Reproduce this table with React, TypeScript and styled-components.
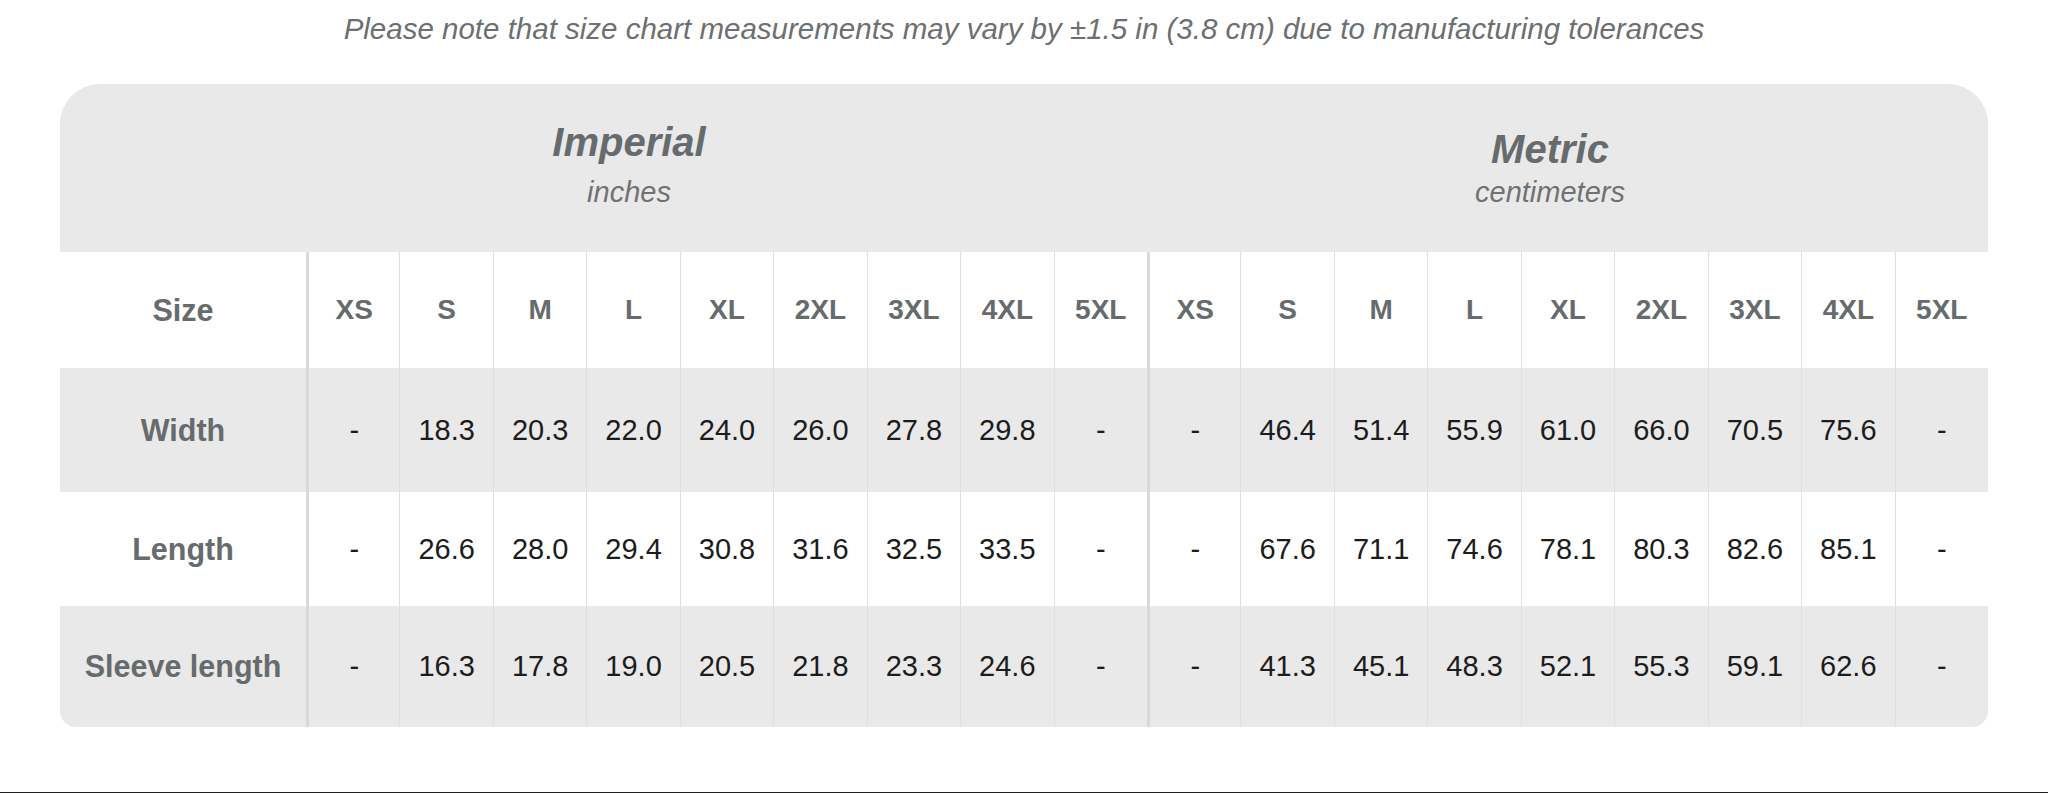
import styled, { createGlobalStyle } from "styled-components";

const GlobalStyle = createGlobalStyle`
  body {
    margin: 0;
    background: #ffffff;
    font-family: "Liberation Sans", Arial, sans-serif;
  }
`;

const Page = styled.div`
  display: flex;
  flex-direction: column;
  align-items: center;
  box-sizing: border-box;
  height: 793px;
  padding-top: 14px;
  border-bottom: 1px solid #1e1e1e;
`;

const Note = styled.p`
  margin: 0;
  font-size: 29.5px;
  line-height: 29px;
  font-style: italic;
  color: #6c6f71;
`;

const Card = styled.div`
  width: 1928px;
  margin-top: 41px;
  border-radius: 40px 40px 16px 16px;
  overflow: hidden;
  background: #ffffff;
`;

const Head = styled.div`
  display: grid;
  grid-template-columns: 1138px 1fr;
  height: 168px;
  background: #e9e9e9;
`;

const HeadCell = styled.div<{ $top: number; $gap: number; $right?: number }>`
  display: flex;
  flex-direction: column;
  align-items: center;
  padding-top: ${(p) => p.$top}px;
  padding-right: ${(p) => p.$right ?? 0}px;
  color: #666b6d;
  font-style: italic;

  span:first-child {
    font-size: 40px;
    line-height: 1;
    font-weight: 700;
    margin-bottom: ${(p) => p.$gap}px;
  }
  span:last-child {
    font-size: 29px;
    line-height: 1;
    color: #6e7274;
  }
`;

const Row = styled.div<{ $shade?: boolean; $h: number }>`
  display: grid;
  grid-template-columns: 246px repeat(18, 1fr);
  height: ${(p) => p.$h}px;
  background: ${(p) => (p.$shade ? "#e9e9e9" : "#ffffff")};
`;

const Label = styled.div`
  display: flex;
  align-items: center;
  justify-content: center;
  font-size: 30.5px;
  font-weight: 700;
  color: #666b6d;
`;

const Cell = styled.div<{ $thick?: boolean; $head?: boolean }>`
  display: flex;
  align-items: center;
  justify-content: center;
  box-sizing: border-box;
  border-left: ${(p) => (p.$thick ? "3px solid #d9d9d9" : "1px solid #dfdfdf")};
  font-size: ${(p) => (p.$head ? "28px" : "29px")};
  font-weight: ${(p) => (p.$head ? 700 : 400)};
  color: ${(p) => (p.$head ? "#666b6d" : "#1c1c1c")};
`;

const sizes = ["XS", "S", "M", "L", "XL", "2XL", "3XL", "4XL", "5XL"];

const rows: { label: string; h: number; inch: string[]; cm: string[] }[] = [
  {
    label: "Width",
    h: 124,
    inch: ["-", "18.3", "20.3", "22.0", "24.0", "26.0", "27.8", "29.8", "-"],
    cm: ["-", "46.4", "51.4", "55.9", "61.0", "66.0", "70.5", "75.6", "-"],
  },
  {
    label: "Length",
    h: 114,
    inch: ["-", "26.6", "28.0", "29.4", "30.8", "31.6", "32.5", "33.5", "-"],
    cm: ["-", "67.6", "71.1", "74.6", "78.1", "80.3", "82.6", "85.1", "-"],
  },
  {
    label: "Sleeve length",
    h: 121,
    inch: ["-", "16.3", "17.8", "19.0", "20.5", "21.8", "23.3", "24.6", "-"],
    cm: ["-", "41.3", "45.1", "48.3", "52.1", "55.3", "59.1", "62.6", "-"],
  },
];

function SizeChart() {
  return (
    <Card>
      <Head>
        <HeadCell $top={38} $gap={16}>
          <span>Imperial</span>
          <span>inches</span>
        </HeadCell>
        <HeadCell $top={45} $gap={9} $right={86}>
          <span>Metric</span>
          <span>centimeters</span>
        </HeadCell>
      </Head>
      <Row $h={116}>
        <Label>Size</Label>
        {[...sizes, ...sizes].map((s, i) => (
          <Cell key={i} $head $thick={i % 9 === 0}>
            {s}
          </Cell>
        ))}
      </Row>
      {rows.map((r, idx) => (
        <Row key={r.label} $h={r.h} $shade={idx % 2 === 0}>
          <Label>{r.label}</Label>
          {[...r.inch, ...r.cm].map((v, i) => (
            <Cell key={i} $thick={i % 9 === 0}>
              {v}
            </Cell>
          ))}
        </Row>
      ))}
    </Card>
  );
}

export default function App() {
  return (
    <>
      <GlobalStyle />
      <Page>
        <Note>
          Please note that size chart measurements may vary by ±1.5 in (3.8 cm) due to
          manufacturing tolerances
        </Note>
        <SizeChart />
      </Page>
    </>
  );
}
